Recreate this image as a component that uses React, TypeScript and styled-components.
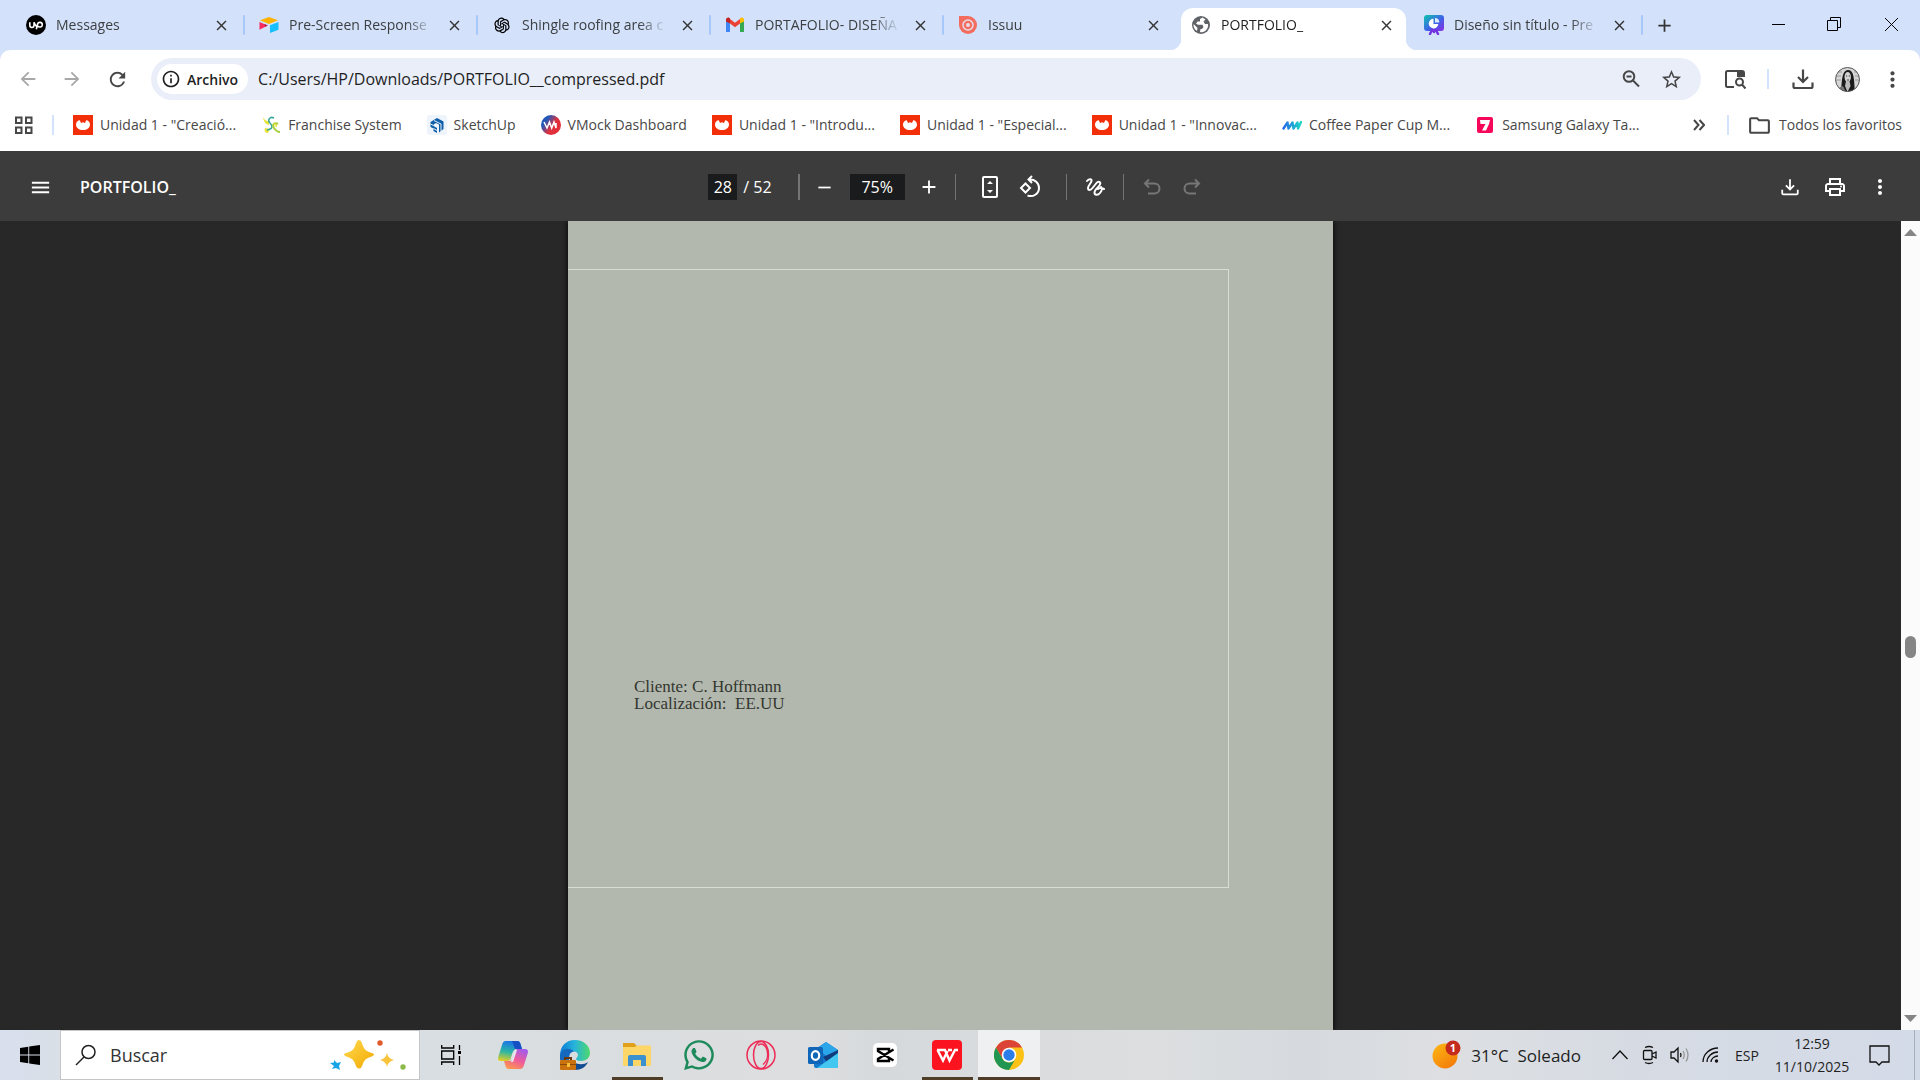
import React from "react";
import styled, { createGlobalStyle, css } from "styled-components";
import {
  MdArrowBack, MdArrowForward, MdRefresh, MdInfoOutline, MdStarOutline, MdMoreVert,
  MdMenu, MdAdd, MdRemove, MdOutlinePrint, MdClose, MdOutlineFolder,
} from "react-icons/md";
import { AiOutlineOpenAI } from "react-icons/ai";
import { FaWhatsapp } from "react-icons/fa";

const ui = `"Open Sans", "Noto Sans", sans-serif`;

const Global = createGlobalStyle`
  *, *::before, *::after { box-sizing: border-box; }
  body { margin: 0; font-family: ${ui}; color: #1f1f1f; overflow: hidden; }
  button, input { font: inherit; color: inherit; border: 0; padding: 0; margin: 0; background: none; outline: 0; }
  svg { display: block; flex: none; }
  a { color: inherit; text-decoration: none; }
`;

const Screen = styled.div`
  display: flex;
  flex-direction: column;
  height: 100vh;
  background: #d3e1fa;
`;

/* ---------- Tab strip ---------- */

const TabStrip = styled.header`
  display: flex;
  flex: none;
  height: 50px;
  padding-left: 12px;
`;

const TabList = styled.nav`
  display: flex;
  flex: 0 1 auto;
  min-width: 0;
`;

const Tab = styled.div<{ $active?: boolean; $rule?: boolean }>`
  position: relative;
  display: flex;
  align-items: center;
  flex: 0 1 233px;
  width: 233px;
  min-width: 0;
  padding: 0 14px;
  z-index: 0;
  ${(p) => p.$rule && css`
    &::after {
      content: "";
      position: absolute;
      right: 0;
      top: 15px;
      width: 2px;
      height: 20px;
      border-radius: 1px;
      background: #a8c7fa;
    }
  `}
  ${(p) => p.$active && css`
    &::before {
      content: "";
      position: absolute;
      z-index: -1;
      inset: 8px 4px 0;
      border-radius: 12px 12px 0 0;
      background: #fff;
    }
    &::after {
      content: "";
      position: absolute;
      z-index: -1;
      left: -8px;
      right: -8px;
      bottom: 0;
      height: 12px;
      background:
        radial-gradient(circle at 0 0, transparent 12px, #fff 13px) left / 12px 12px no-repeat,
        radial-gradient(circle at 100% 0, transparent 12px, #fff 13px) right / 12px 12px no-repeat;
    }
  `}
`;

const TabTitle = styled.button<{ $active?: boolean }>`
  display: flex;
  align-items: center;
  flex: 1;
  min-width: 0;
  gap: 10px;
  font-size: 14px;
  line-height: 20px;
  text-align: left;
  color: ${(p) => (p.$active ? "#1f1f1f" : "#3c4043")};
`;

const TabText = styled.span`
  flex: 1;
  min-width: 0;
  margin-right: 6px;
  overflow: hidden;
  white-space: nowrap;
  mask-image: linear-gradient(90deg, #000 calc(100% - 32px), transparent calc(100% - 4px));
`;

const Bare = styled.button<{ $w?: number; $c?: string }>`
  display: flex;
  align-items: center;
  justify-content: center;
  flex: none;
  width: ${(p) => p.$w ?? 40}px;
  color: ${(p) => p.$c ?? "#474747"};
`;

const WindowButtons = styled.div`
  display: flex;
  margin-left: auto;
  height: 48px;
`;

/* ---------- Address row ---------- */

const BrowserBar = styled.div`
  flex: none;
  background: #fff;
  border-radius: 10px 10px 0 0;
  height: 101px;
`;

const AddressRow = styled.div`
  display: flex;
  align-items: center;
  height: 58px;
  padding: 0 6px;
`;

const Omnibox = styled.form`
  display: flex;
  align-items: center;
  flex: 1;
  height: 42px;
  margin: 0 14px 0 10px;
  padding: 0 10px 0 6px;
  border-radius: 21px;
  background: #e9eef9;
`;

const SiteChip = styled.button`
  display: flex;
  align-items: center;
  flex: none;
  gap: 6px;
  height: 30px;
  padding: 0 10px 0 4px;
  border-radius: 15px;
  background: #fff;
  font-size: 14px;
  font-weight: 600;
`;

const Url = styled.input`
  flex: 1;
  min-width: 0;
  margin-left: 10px;
  font-size: 16px;
  line-height: 24px;
`;

const Rule = styled.span<{ $w?: number; $h?: number; $c?: string; $m?: string }>`
  flex: none;
  width: ${(p) => p.$w ?? 2}px;
  height: ${(p) => p.$h ?? 20}px;
  margin: ${(p) => p.$m ?? "0"};
  background: ${(p) => p.$c ?? "#d3e3fd"};
`;

/* ---------- Bookmarks ---------- */

const BookmarkRow = styled.nav`
  display: flex;
  align-items: center;
  height: 34px;
  padding: 0 18px 0 12px;
`;

const BookmarkList = styled.div`
  display: flex;
  align-items: center;
  flex: 1;
  min-width: 0;
  gap: 25px;
  padding-left: 19px;
  overflow: hidden;
`;

const Bookmark = styled.a`
  display: flex;
  align-items: center;
  flex: none;
  gap: 7px;
  font-size: 14px;
  line-height: 20px;
  color: #474747;
  white-space: nowrap;
`;

/* ---------- PDF viewer ---------- */

const PdfBar = styled.div`
  display: grid;
  grid-template-columns: 1fr auto 1fr;
  align-items: center;
  flex: none;
  height: 70px;
  padding-top: 2px;
  background: #3c3c3c;
  color: #fff;
  font-size: 16px;
`;

const PdfTitle = styled.div`
  display: flex;
  align-items: center;
  gap: 20px;
  padding-left: 20px;
  font-weight: 600;
`;

const PdfTools = styled.div`
  display: flex;
  align-items: center;
`;

const PdfActions = styled.div`
  display: flex;
  justify-content: flex-end;
  padding-right: 18px;
`;

const DarkInput = styled.input<{ $w: number }>`
  width: ${(p) => p.$w}px;
  height: 26px;
  background: #191b1c;
  color: #fff;
  text-align: center;
`;

const PageCount = styled.span`
  margin: 0 26px 0 6px;
  white-space: nowrap;
`;

const Viewer = styled.main`
  display: flex;
  flex: 1;
  min-height: 0;
  background: #282828;
`;

const Canvas = styled.div`
  display: flex;
  justify-content: center;
  flex: 1;
  overflow: hidden;
`;

const Sheet = styled.article`
  width: 765px;
  padding-top: 48px;
  background: #b2b8ae;
  box-shadow: 0 0 6px #000;
`;

const Frame = styled.section`
  width: 661px;
  height: 619px;
  padding: 408px 0 0 66px;
  border: solid #d9ddd5;
  border-width: 1px 1px 1px 0;
  font-family: "Liberation Serif", serif;
  font-size: 17px;
  line-height: 17px;
  color: #33362f;
`;

const Line = styled.p`
  margin: 0;
  white-space: pre;
`;

const ScrollTrack = styled.div`
  display: flex;
  flex-direction: column;
  align-items: center;
  width: 19px;
  padding: 8px 0;
  background: #fbfbfb;
`;

const Thumb = styled.span`
  width: 11px;
  height: 22px;
  border-radius: 6px;
  background: #858585;
`;

const Spacer = styled.span<{ $grow: number }>`
  flex: ${(p) => p.$grow} 1 0;
`;

/* ---------- Taskbar ---------- */

const Taskbar = styled.footer`
  display: flex;
  flex: none;
  height: 50px;
  background: linear-gradient(90deg, #d9dfee 0, #dae0e4 4%, #d8dee1 24%, #dadddf 30%, #dcdee0 42%, #d6d9db 46%, #dcdee0 60%, #d6dade 68%, #dddfe2 75%, #d6dbe3 85%, #d4dbe8 100%);
`;

const Search = styled.label`
  display: flex;
  align-items: center;
  flex: none;
  width: 360px;
  padding: 0 12px 0 14px;
  border: 1px solid #c3c5c7;
  background: #fff;
`;

const SearchInput = styled.input`
  flex: 1;
  min-width: 0;
  margin-left: 13px;
  font-size: 18px;
  &::placeholder { color: #333; opacity: 1; }
`;

const AppButton = styled.button<{ $state?: "open" | "active" }>`
  display: flex;
  align-items: center;
  justify-content: center;
  flex: none;
  width: 62px;
  height: 50px;
  background: ${(p) => (p.$state === "active" ? "#eef0f2" : "transparent")};
  ${(p) => p.$state && css`
    background-image: linear-gradient(#4f3d28, #4f3d28);
    background-repeat: no-repeat;
    background-position: bottom;
    background-size: ${p.$state === "active" ? "100%" : "51px"} 3px;
  `}
`;

const Tray = styled.div`
  display: flex;
  align-items: center;
  margin-left: auto;
`;

const Weather = styled.button`
  display: flex;
  align-items: center;
  gap: 10px;
  margin-right: 24px;
  font-size: 17px;
  white-space: pre;
`;

const Lang = styled.button`
  width: 40px;
  margin-right: 4px;
  font-size: 14px;
`;

const Clock = styled.time`
  width: 82px;
  font-size: 14px;
  line-height: 23px;
  text-align: center;
`;

const ShowDesktop = styled.button`
  width: 6px;
  height: 50px;
  margin-left: 9px;
  border-left: 1px solid #a9b0bb;
`;

/* ---------- Drawings ---------- */

const UpworkIcon = () => (
  <svg width="20" height="20" viewBox="0 0 20 20">
    <circle cx="10" cy="10" r="10" fill="#000" />
    <path d="M3.8 7.2v3c0 3 4.2 3 4.2 0v-3c.8 2.200 1.800 4 3.400 4.800M10.300 14.200l1.300-5.200c.6-2.300 4.700-2.200 4.700.7 0 2.500-3 3-4.600 1.500" fill="none" stroke="#fff" strokeWidth="1.600" />
  </svg>
);
const AirtableIcon = () => (
  <svg width="20" height="20" viewBox="0 0 20 20">
    <path d="M1 5.300 10 2l9 3.300L10 9z" fill="#fcb400" />
    <path d="M11 10.200 19.500 7v7.700L11 18z" fill="#18bfff" />
    <path d="M.5 7 8.700 10.500.5 14.700z" fill="#f82b60" />
    <path d="m6 11.800 2.700-1.300-3.200-1.400z" fill="#a8184a" />
  </svg>
);
const GmailIcon = () => (
  <svg width="20" height="20" viewBox="0 0 20 20">
    <path d="M1 17V5l4 3v9z" fill="#4285f4" />
    <path d="M15 17V8l4-3v12z" fill="#34a853" />
    <path d="M5 8.500V4l5 3.800L15 4v4.500l-5 3.800z" fill="#ea4335" />
    <path d="M1 6.500V4.800C1 2.900 3.200 2 4.600 3.100L5 3.500v5.100L1 6.500z" fill="#c5221f" />
    <path d="M19 6.500V4.800c0-1.900-2.200-2.800-3.600-1.700l-.4.400v5.100z" fill="#fbbc04" />
  </svg>
);
const IssuuIcon = () => (
  <svg width="20" height="20" viewBox="0 0 20 20">
    <path d="M1 1h9a9 9 0 1 1-9 9z" fill="#f36d5f" />
    <circle cx="10" cy="10" r="5" fill="none" stroke="#e9dce8" strokeWidth="1.500" />
    <circle cx="10" cy="10" r="2" fill="#e9dce8" />
  </svg>
);
const GlobeIcon = () => (
  <svg width="20" height="20" viewBox="0 0 20 20">
    <circle cx="10" cy="10" r="9" fill="#5f6368" />
    <path d="M11.500 2.400 9 4v2.500H6.500L5 8.500l2 1.200h4.500l1 2.300-1.500 2H9.500L9 17c5 1.200 8.800-3.500 8-8h-3l-1.500-2.500 2-2zM2.500 9l4 4-.5 3C3.500 14.500 2.200 12 2.500 9z" fill="#fff" />
  </svg>
);
const DesignIcon = () => (
  <svg width="20" height="20" viewBox="0 0 20 20">
    <defs><linearGradient id="dz" x1="0" y1="0" x2="1" y2="1"><stop offset=".1" stopColor="#13b5b8" /><stop offset=".55" stopColor="#3f62e8" /><stop offset="1" stopColor="#8b2be2" /></linearGradient></defs>
    <rect y="0" width="20" height="16" rx="3" fill="url(#dz)" />
    <path d="m8 15-2 4M12 15l2 4M10 15v2" stroke="#7335e0" strokeWidth="2.500" strokeLinecap="round" />
    <path d="M9.500 3.800A4.800 4.800 0 1 0 14.300 9H9.500z" fill="#fff" />
    <path d="M11 3a4.500 4.500 0 0 1 4.300 4.500H11z" fill="#d8ecff" />
  </svg>
);
const RedBird = () => (
  <svg width="20" height="20" viewBox="0 0 20 20">
    <rect width="20" height="20" fill="#f22f08" />
    <path d="M3 9.500C3 7 5 5.300 6.800 5.300l1.200 2.700L10 7.300l2 .7 1.200-2.700C15 5.300 17 7 17 9.500c0 3.500-3 5.500-7 5.500s-7-2-7-5.500z" fill="#fff" />
  </svg>
);
const FranchiseIcon = () => (
  <svg width="20" height="20" viewBox="0 0 20 20">
    <path d="M2 2c2 4 4 4 6 4v4C4 9 2.500 6 2 2zM4 13l5 1-2 4c-3 0-4-2-3-5z" fill="#e8e33b" />
    <path d="M13 3C9 1 6 5 9 8s3 6-3 7" fill="none" stroke="#3aa69a" strokeWidth="1.500" />
    <path d="M17 9c-4-2-6 1-4 4s3 4 6 4" fill="none" stroke="#a9d13d" strokeWidth="2" />
    <path d="M13 9c2 0 3 1 2 3" fill="none" stroke="#e8e33b" strokeWidth="1.500" />
  </svg>
);
const SketchUpIcon = () => (
  <svg width="20" height="20" viewBox="0 0 20 20">
    <rect width="20" height="20" rx="3" fill="#edf4fb" />
    <path d="M3.500 7 10 3l6.500 3.500V14l-4.500 3.500V9.500L9 8 6.500 9.500v1.500l3.500 2V18l-3.500-2v-2.500l-3-1.500z" fill="#0f5ea8" />
    <path d="m3.500 9 3 1.500M6.500 13.500l3.500 2M7 5.500l7 3.500v7.500" fill="none" stroke="#edf4fb" strokeWidth="1" />
  </svg>
);
const VMockIcon = () => (
  <svg width="20" height="20" viewBox="0 0 20 20">
    <defs><linearGradient id="vm" x1="0" y1="0" x2="1" y2=".7"><stop offset=".3" stopColor="#2458b8" /><stop offset=".65" stopColor="#e1303c" /></linearGradient></defs>
    <circle cx="10" cy="10" r="10" fill="url(#vm)" />
    <path d="m3 7 3 6 2.500-6 2.200 6L13 7l2 6V8" fill="none" stroke="#fff" strokeWidth="1.500" />
  </svg>
);
const WavesIcon = () => (
  <svg width="20" height="20" viewBox="0 0 20 20">
    <defs><linearGradient id="wv"><stop stopColor="#246be8" /><stop offset="1" stopColor="#1cd7c5" /></linearGradient></defs>
    <path d="m1.500 13.500 4-6 1 6 4-6 1 6 4-6 .5 6L19 7" fill="none" stroke="url(#wv)" strokeWidth="2.400" strokeLinejoin="round" strokeLinecap="round" />
  </svg>
);
const SevenIcon = () => (
  <svg width="20" height="20" viewBox="0 0 20 20">
    <rect x="2" y="2" width="16" height="16" rx="2" fill="#f5085a" />
    <path d="M5 5h10l-1 4-3 6.500H7l3.500-6.500H5.500z" fill="#fff" />
  </svg>
);
const AppsIcon = () => (
  <svg width="20" height="20" viewBox="0 0 20 20" fill="none" stroke="#474747" strokeWidth="2">
    <path d="M2 2.500h5.500V8H2zM12 2.500h5.500V8H12zM2 12.500h5.500V18H2zM12 12.500h5.500V18H12z" />
  </svg>
);
const ZoomOutIcon = () => (
  <svg width="20" height="20" viewBox="0 0 20 20" fill="none" stroke="#474747" strokeWidth="2">
    <circle cx="8" cy="7.500" r="5.300" /><path d="m12 11.500 6 6M5.500 7.500h5" />
  </svg>
);
const ReaderIcon = () => (
  <svg width="22" height="22" viewBox="0 0 22 22" fill="none" stroke="#474747" strokeWidth="2">
    <path d="M10 19H3.500Q2 19 2 17.500V4.500Q2 3 3.500 3H18q2 0 2 2v4" />
    <path d="M13 3h6q1 0 1 1v5h-7z" fill="#474747" stroke="none" />
    <circle cx="15.500" cy="14" r="3.500" /><path d="m18 16.500 3.500 4" />
  </svg>
);
const DownloadIcon = ({ s = 22 }: { s?: number }) => (
  <svg width={s} height={s} viewBox="0 0 22 22" fill="none" stroke="currentColor" strokeWidth="2.200">
    <path d="M11 1.500v12M6 9l5 5 5-5M1.500 14.500v4q0 1.500 1.500 1.500h16q1.500 0 1.500-1.500v-4" />
  </svg>
);
const Avatar = () => (
  <svg width="25" height="25" viewBox="0 0 25 25">
    <defs><clipPath id="av"><circle cx="12.500" cy="12.500" r="12" /></clipPath></defs>
    <g clipPath="url(#av)">
      <path d="M0 0h25v25H0z" fill="#d6d6d6" />
      <path d="M0 5h7M0 9h6M0 13h6M19 5h6M20 9h5M20 13h5" stroke="#9a9a9a" />
      <path d="M6 25C7 18 6 3 13 3s6 13 7 22z" fill="#1b1b1b" />
      <ellipse cx="12.700" cy="10" rx="3.200" ry="5" fill="#d2d2d2" />
      <path d="M11 14h3.500l1 5-3 6-2.500-6z" fill="#bbb" />
      <path d="M11 9h1.200m1.500 0H15M12 13h2" stroke="#444" />
      <path d="M2 25c1-4 3-5 6-6l3 6z" fill="#777" />
    </g>
    <circle cx="12.500" cy="12.500" r="12" fill="none" stroke="#555" />
  </svg>
);
const FitIcon = () => (
  <svg width="20" height="24" viewBox="0 0 20 24">
    <rect x="3" y="2" width="14" height="20" rx="1" fill="none" stroke="#fff" strokeWidth="2" />
    <path d="m10 6 3 3H7zM10 18l3-3H7z" fill="#fff" />
  </svg>
);
const RotateIcon = () => (
  <svg width="24" height="24" viewBox="0 0 24 24" fill="none" stroke="#fff" strokeWidth="2">
    <path d="m7.500 8.500 4.500 4.500-4.500 4.500L3 13z" />
    <path d="M11 4.500c6-.500 10 3.500 10 8.500 0 6-6 9.500-11.500 7.500M14 1l-3.500 3.500L14 8" />
  </svg>
);
const DrawIcon = () => (
  <svg width="24" height="24" viewBox="0 0 24 24" fill="none" stroke="#fff" strokeWidth="2" strokeLinecap="round">
    <path d="M4 6c2-2.500 5-2.500 4.500 0C8 8.500 5 10.500 5 13c0 2.500 2.500 2.500 4.500 0l4-5c2-2.500 4.500-1 3.500 1.500-1 2.500-5.500 5-5.500 8s3.500 3 5.500.5c2-2.500 2-5 1-6M15 14c1.500-1.500 4-1 6 0" />
  </svg>
);
const UndoIcon = ({ flip }: { flip?: boolean }) => (
  <svg width="20" height="20" viewBox="0 0 20 20" fill="none" stroke="#767676" strokeWidth="2">
    <path d={flip ? "M13 2.500 17 6.500l-4 4M17 6.500H7.500a5 5 0 0 0 0 10H14" : "M7 2.500 3 6.500l4 4M3 6.500h9.500a5 5 0 0 1 0 10H6"} />
  </svg>
);
const Arrow = ({ down }: { down?: boolean }) => (
  <svg width="13" height="7" viewBox="0 0 13 7"><path d={down ? "M0 0h13L6.500 7z" : "M0 7h13L6.500 0z"} fill="#858585" /></svg>
);

const Windows = () => (
  <svg width="20" height="20" viewBox="0 0 20 20"><path d="M0 3l8.300-1.200v7.700H0zM9.200 1.600 20 0v9.500H9.200zM0 10.400h8.300v7.800L0 17zM9.200 10.400H20V20L9.200 18.400z" /></svg>
);
const Loupe = () => (
  <svg width="22" height="22" viewBox="0 0 22 22" fill="none" stroke="#222" strokeWidth="1.500"><circle cx="13.500" cy="8" r="6.500" /><path d="M9 13 1 21" /></svg>
);
const Sparkles = () => (
  <svg width="78" height="34" viewBox="0 0 78 34">
    <defs><linearGradient id="sp" x1="0" y1="0" x2="1" y2="1"><stop stopColor="#ffda50" /><stop offset="1" stopColor="#f2a900" /></linearGradient></defs>
    <path d="M30 2c2 0 3 3 4 6s3 5 6 6 5 1.500 5 2.500-2 2-5 3-5 3-6 6-2 5-4 5-3-2-4-5-3-5-6-6-5-2-5-3 2-1.500 5-2.500 5-3 6-6 2-6 4-6z" fill="url(#sp)" />
    <path d="M58 15q1 5.500 7 7-6 1.500-7 7-1-5.500-7-7 6-1.500 7-7z" fill="#f8c43c" />
    <path d="m5 22 3 3 4-1-2 4 1 4-4-2-4 1 2-3-4-3 4-.500z" fill="#18a5e8" />
    <circle cx="51" cy="5" r="2.700" fill="#e05a2b" /><circle cx="74" cy="29" r="2.700" fill="#8cba4a" />
  </svg>
);
const TaskView = () => (
  <svg width="20" height="20" viewBox="0 0 20 20" fill="none" stroke="#000" strokeWidth="1.300">
    <path d="M.7 0v3h12V0M.7 6h12v8H.7zM.7 20v-3h12v3M18.500 0v5M18.500 11v9" /><path d="M17 6h3v3h-3z" fill="#000" stroke="none" />
  </svg>
);
const Copilot = () => (
  <svg width="30" height="30" viewBox="0 0 30 30">
    <defs>
      <linearGradient id="c1" x1=".3" y1="0" x2=".1" y2="1"><stop stopColor="#1b77e6" /><stop offset=".5" stopColor="#2bb5a4" /><stop offset="1" stopColor="#f0cf20" /></linearGradient>
      <linearGradient id="c2" x1=".7" y1="0" x2=".2" y2="1"><stop stopColor="#a45be8" /><stop offset=".5" stopColor="#ee5c9a" /><stop offset="1" stopColor="#ff9a4a" /></linearGradient>
    </defs>
    <path d="M8 1h11c2 0 3 1 3.500 3L24 9h-5c-3 0-4 2-5 5l-1.500 5c-.5 1.500-1 2-3 2H3c-3 0-3.500-2-2.500-5L4 5c.8-2.500 1.500-4 4-4z" fill="url(#c1)" />
    <path d="M14 1h5c2 0 3 1 3.500 3L24 9h-7z" fill="#174fc4" />
    <path d="M22 29H11c-2 0-3-1-3.500-3L6 21h5c3 0 4-2 5-5l1.500-5c.5-1.500 1-2 3-2H27c3 0 3.500 2 2.500 5L26 25c-.8 2.500-1.500 4-4 4z" fill="url(#c2)" />
    <path d="M17 10h2l-4 12h-2z" fill="#e9e6ee" />
  </svg>
);
const Edge = () => (
  <svg width="30" height="30" viewBox="0 0 30 30">
    <defs><linearGradient id="e1" x1="0" x2="1"><stop stopColor="#0b7bd6" /><stop offset=".5" stopColor="#28b5da" /><stop offset="1" stopColor="#4fd86b" /></linearGradient></defs>
    <path d="M0 16C0 6 6 0 15 0s15 6 15 13c0 5-4 8-9 8-3 0-5-1-5-2s2-2 2-4-2-3.500-4-3.500c-4 0-6 4-6 9z" fill="url(#e1)" />
    <path d="M14 22c4 3 10 3 14 0-2 5-7 8-13 8z" fill="#124d91" />
    <path d="M0 16C1 9 8 6 14 11.500c-4 0-5 4-5 8.500H0z" fill="#1468bd" />
    <path d="M5 20v-2h6v2" fill="none" stroke="#69380d" strokeWidth="2" />
    <rect y="20" width="16" height="10" rx="1" fill="#c9720e" /><path d="M0 24h16v1H0z" fill="#8a4a0a" /><path d="M7 23h3v4H7z" fill="#f5bd3a" />
  </svg>
);
const Explorer = () => (
  <svg width="30" height="30" viewBox="0 0 30 30">
    <path d="M1 3h11l3 3v4H1z" fill="#e0a01c" /><path d="M1 7h12l2-1.500h13q1 0 1 1V25q0 1-1 1H2q-1 0-1-1z" fill="#fdd667" />
    <path d="M6 26v-9q0-2 2-2h14q2 0 2 2v9h-5v-6h-8v6z" fill="#3b90d0" />
  </svg>
);
const Opera = () => (
  <svg width="30" height="30" viewBox="0 0 30 30" fill="none" stroke="#ee2b57" strokeWidth="1.500">
    <circle cx="15" cy="15" r="14" /><ellipse cx="15" cy="15" rx="7.500" ry="13.500" /><path d="M12 5.500c3-3 7.500-1 9 4 1.500 6 0 12-4 15" />
  </svg>
);
const Outlook = () => (
  <svg width="30" height="30" viewBox="0 0 30 30">
    <path d="M6 10 18 2l12 8v16q0 2-2 2H8q-2 0-2-2z" fill="#1379cf" /><path d="M10 8 18 2l12 8-10 8z" fill="#2ba5ea" /><path d="m15 17 15-7v4L19 22z" fill="#123b7c" />
    <path d="M30 13v13q0 2-2 2H9z" fill="#42c8f0" /><rect y="7" width="15" height="17" rx="1.500" fill="#0f65b8" />
    <ellipse cx="7.500" cy="15.500" rx="3.700" ry="4.300" fill="none" stroke="#fff" strokeWidth="2.200" />
  </svg>
);
const CapCut = () => (
  <svg width="30" height="30" viewBox="0 0 30 30">
    <rect x="3" y="3" width="24" height="24" rx="5" fill="#fff" />
    <path d="M23.500 9.500 8 19v2h11v-2.500M23.500 20.500 8 11V9h11v2.500" fill="none" stroke="#000" strokeWidth="2.400" />
  </svg>
);
const Wps = () => (
  <svg width="30" height="30" viewBox="0 0 30 30">
    <rect width="30" height="30" rx="4" fill="#fb1420" />
    <path d="M5 10h8l4.500 10.500L23 10h3M5.500 10 11 20.500 15.500 11M16 10h4" fill="none" stroke="#fff" strokeWidth="2.400" />
  </svg>
);
const Chrome = () => (
  <svg width="30" height="30" viewBox="0 0 30 30">
    <circle cx="15" cy="15" r="15" fill="#fbc116" />
    <path d="M2 7.500A15 15 0 0 1 28 7.500H15l-6.500 11.200z" fill="#db4437" />
    <path d="M2 7.500 8.500 18.700a7.500 7.500 0 0 0 13 0L15 30A15 15 0 0 1 2 7.500z" fill="#219653" />
    <circle cx="15" cy="15" r="7.300" fill="#fff" /><circle cx="15" cy="15" r="5.700" fill="#2b7de9" />
  </svg>
);
const WeatherIcon = () => (
  <svg width="30" height="30" viewBox="0 0 30 30">
    <defs><linearGradient id="we" x1="0" y1="0" x2=".8" y2="1"><stop stopColor="#fdb913" /><stop offset="1" stopColor="#f37a0a" /></linearGradient></defs>
    <circle cx="14" cy="16" r="12.500" fill="url(#we)" /><circle cx="22" cy="8" r="7.500" fill="#c42b1c" />
    <text x="22" y="12" fill="#fff" fontSize="11" fontWeight="700" textAnchor="middle">1</text>
  </svg>
);
const thin = { fill: "none", stroke: "#111", strokeWidth: 1.3 };
const ChevronUp = () => (<svg width="16" height="10" viewBox="0 0 16 10" {...thin}><path d="m.5 9 7.500-8 7.500 8" /></svg>);
const MeetNow = () => (
  <svg width="16" height="20" viewBox="0 0 16 20" {...thin}><rect x="1.500" y="5.500" width="8.500" height="9" rx="1" /><path d="m10 9 4-2v6l-4-2M3 2.500q4-2 8 0M3 17.500q4 2 8 0" /></svg>
);
const Volume = () => (
  <svg width="21" height="18" viewBox="0 0 21 18" {...thin}><path d="M1 6h3l4-4v14l-4-4H1zM10.500 7q1 2 0 4" /><path d="M13 5q2.500 4 0 8M16 2.500q4 6.500 0 13" stroke="#999" /></svg>
);
const Wifi = () => (
  <svg width="18" height="18" viewBox="0 0 18 18" {...thin}><path d="M1 16C1 8 8 2 16 2M5 16C5 10.500 10 6 16 6M9 16c0-3 3-6 7-6" /><circle cx="14.500" cy="15" r="1.700" fill="#111" stroke="none" /></svg>
);
const Notify = () => (<svg width="21" height="21" viewBox="0 0 21 21" {...thin}><path d="M1 1h19v16h-7l-3 3-3-3H1z" /></svg>);

/* ---------- Data ---------- */

const tabs = [
  { title: "Messages", icon: <UpworkIcon />, rule: true },
  { title: "Pre-Screen Response", icon: <AirtableIcon />, rule: true },
  { title: "Shingle roofing area c", icon: <AiOutlineOpenAI size={20} color="#000" />, rule: true },
  { title: "PORTAFOLIO- DISEÑA", icon: <GmailIcon />, rule: true },
  { title: "Issuu", icon: <IssuuIcon /> },
  { title: "PORTFOLIO_", icon: <GlobeIcon />, active: true },
  { title: "Diseño sin título - Pre", icon: <DesignIcon />, rule: true },
];

const bookmarks: [string, React.ReactNode][] = [
  ['Unidad 1 - "Creació...', <RedBird />],
  ["Franchise System", <FranchiseIcon />],
  ["SketchUp", <SketchUpIcon />],
  ["VMock Dashboard", <VMockIcon />],
  ['Unidad 1 - "Introdu...', <RedBird />],
  ['Unidad 1 - "Especial...', <RedBird />],
  ['Unidad 1 - "Innovac...', <RedBird />],
  ["Coffee Paper Cup M...", <WavesIcon />],
  ["Samsung Galaxy Ta...", <SevenIcon />],
];

const apps: { name: string; icon: React.ReactNode; state?: "open" | "active" }[] = [
  { name: "Copilot", icon: <Copilot /> },
  { name: "Edge", icon: <Edge /> },
  { name: "Explorador", icon: <Explorer />, state: "open" },
  { name: "WhatsApp", icon: <FaWhatsapp size={34} color="#1d8a5b" /> },
  { name: "Opera", icon: <Opera /> },
  { name: "Outlook", icon: <Outlook /> },
  { name: "CapCut", icon: <CapCut /> },
  { name: "WPS", icon: <Wps />, state: "open" },
  { name: "Chrome", icon: <Chrome />, state: "active" },
];

export default function App() {
  return (
    <Screen>
      <Global />
      <TabStrip>
        <TabList>
          {tabs.map((t) => (
            <Tab key={t.title} $active={t.active} $rule={t.rule}>
              <TabTitle $active={t.active}>{t.icon}<TabText>{t.title}</TabText></TabTitle>
              <Bare $w={20} $c="#333" aria-label="Cerrar pestaña"><MdClose size={17} /></Bare>
            </Tab>
          ))}
        </TabList>
        <Bare $w={42} $c="#333" aria-label="Nueva pestaña"><MdAdd size={21} /></Bare>
        <WindowButtons>
          <Bare $w={56} aria-label="Minimizar"><svg width="13" height="13" viewBox="0 0 13 13"><path d="M0 6.500h13" stroke="#000" /></svg></Bare>
          <Bare $w={56} aria-label="Restaurar"><svg width="14" height="14" viewBox="0 0 14 14" fill="none" stroke="#000"><path d="M.5 3.500h10v10H.5zM3.500 3V.5h10v10H11" /></svg></Bare>
          <Bare $w={58} aria-label="Cerrar"><svg width="13" height="13" viewBox="0 0 13 13"><path d="m0 0 13 13M13 0 0 13" stroke="#000" /></svg></Bare>
        </WindowButtons>
      </TabStrip>

      <BrowserBar>
        <AddressRow>
          <Bare $w={44} $c="#a8a8a8" aria-label="Atrás"><MdArrowBack size={22} /></Bare>
          <Bare $w={44} $c="#a8a8a8" aria-label="Adelante"><MdArrowForward size={22} /></Bare>
          <Bare $w={47} aria-label="Volver a cargar"><MdRefresh size={23} /></Bare>
          <Omnibox onSubmit={(e) => e.preventDefault()}>
            <SiteChip type="button"><MdInfoOutline size={20} />Archivo</SiteChip>
            <Url aria-label="Dirección" defaultValue="C:/Users/HP/Downloads/PORTFOLIO__compressed.pdf" />
            <Bare type="button" aria-label="Zoom"><ZoomOutIcon /></Bare>
            <Bare type="button" aria-label="Favorito"><MdStarOutline size={23} /></Bare>
          </Omnibox>
          <Bare aria-label="Panel de lectura"><ReaderIcon /></Bare>
          <Rule $m="0 12px" />
          <Bare $w={44} aria-label="Descargas"><DownloadIcon /></Bare>
          <Bare $w={45} aria-label="Perfil"><Avatar /></Bare>
          <Bare $w={44} aria-label="Menú"><MdMoreVert size={25} /></Bare>
        </AddressRow>
        <BookmarkRow>
          <Bare $w={24} aria-label="Aplicaciones"><AppsIcon /></Bare>
          <Rule $m="0 0 0 16px" />
          <BookmarkList>
            {bookmarks.map(([label, icon]) => (
              <Bookmark href="#" key={label}>{icon}{label}</Bookmark>
            ))}
          </BookmarkList>
          <Bare aria-label="Más favoritos"><svg width="12" height="12" viewBox="0 0 12 12" fill="none" stroke="#474747" strokeWidth="2"><path d="m1 1 4.500 5L1 11M6.500 1 11 6l-4.500 5" /></svg></Bare>
          <Rule $m="0 18px 0 8px" />
          <Bookmark href="#"><MdOutlineFolder size={25} />Todos los favoritos</Bookmark>
        </BookmarkRow>
      </BrowserBar>

      <PdfBar>
        <PdfTitle><Bare $c="#fff" aria-label="Menú"><MdMenu size={23} /></Bare>PORTFOLIO_</PdfTitle>
        <PdfTools>
          <DarkInput $w={29} aria-label="Página" defaultValue="28" />
          <PageCount>/ 52</PageCount>
          <Rule $h={26} $c="#747474" $m="0 4px 0 0" />
          <Bare $w={42} $c="#fff" aria-label="Alejar"><MdRemove size={21} /></Bare>
          <Rule $w={4} $h={0} />
          <DarkInput $w={55} aria-label="Zoom" defaultValue="75%" />
          <Bare $w={48} $c="#fff" aria-label="Acercar"><MdAdd size={22} /></Bare>
          <Rule $w={1} $h={26} $c="#747474" $m="0 14px 0 2px" />
          <Bare $c="#fff" aria-label="Ajustar"><FitIcon /></Bare>
          <Bare $c="#fff" aria-label="Girar"><RotateIcon /></Bare>
          <Rule $w={1} $h={26} $c="#747474" $m="0 8px 0 16px" />
          <Bare $c="#fff" aria-label="Dibujar"><DrawIcon /></Bare>
          <Rule $w={1} $h={26} $c="#747474" $m="0 8px" />
          <Bare aria-label="Deshacer"><UndoIcon /></Bare>
          <Bare aria-label="Rehacer"><UndoIcon flip /></Bare>
        </PdfTools>
        <PdfActions>
          <Bare $w={45} $c="#fff" aria-label="Descargar"><DownloadIcon s={18} /></Bare>
          <Bare $w={45} $c="#fff" aria-label="Imprimir"><MdOutlinePrint size={24} /></Bare>
          <Bare $w={45} $c="#fff" aria-label="Más"><MdMoreVert size={24} /></Bare>
        </PdfActions>
      </PdfBar>

      <Viewer>
        <Canvas>
          <Sheet>
            <Frame>
              <Line>Cliente: C. Hoffmann</Line>
              <Line>{"Localización:  EE.UU"}</Line>
            </Frame>
          </Sheet>
        </Canvas>
        <ScrollTrack>
          <Arrow />
          <Spacer $grow={401} />
          <Thumb />
          <Spacer $grow={357} />
          <Arrow down />
        </ScrollTrack>
      </Viewer>

      <Taskbar>
        <Bare $w={60} aria-label="Inicio"><Windows /></Bare>
        <Search>
          <Loupe />
          <SearchInput aria-label="Buscar" placeholder="Buscar" />
          <Sparkles />
        </Search>
        <Bare $w={62} aria-label="Vista de tareas"><TaskView /></Bare>
        {apps.map((a) => (
          <AppButton key={a.name} $state={a.state} aria-label={a.name}>{a.icon}</AppButton>
        ))}
        <Tray>
          <Weather><WeatherIcon />{"31°C  Soleado"}</Weather>
          <Bare $w={30} aria-label="Iconos ocultos"><ChevronUp /></Bare>
          <Bare $w={30} aria-label="Reunirse"><MeetNow /></Bare>
          <Bare $w={30} aria-label="Volumen"><Volume /></Bare>
          <Bare $w={32} aria-label="Red"><Wifi /></Bare>
          <Lang>ESP</Lang>
          <Clock>12:59<br />11/10/2025</Clock>
          <Bare $w={52} aria-label="Notificaciones"><Notify /></Bare>
          <ShowDesktop aria-label="Mostrar escritorio" />
        </Tray>
      </Taskbar>
    </Screen>
  );
}
